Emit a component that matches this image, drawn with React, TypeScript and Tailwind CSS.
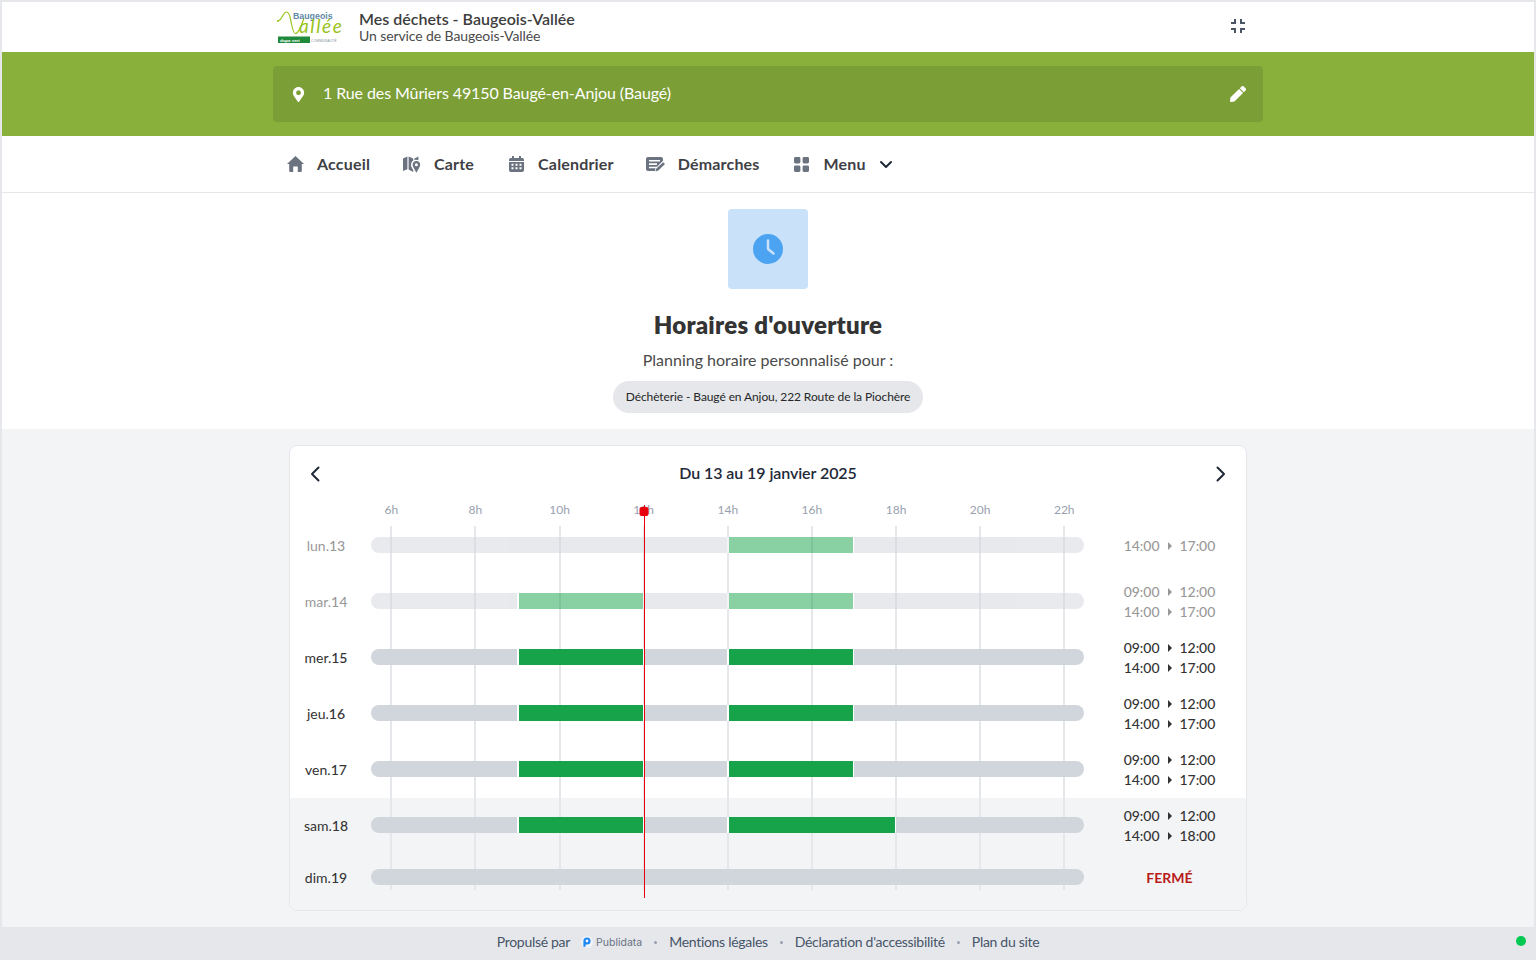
import React from "react";
import { FaMapMarkerAlt, FaPen } from "react-icons/fa";
import { MdFullscreenExit } from "react-icons/md";

type Seg = [number, number];
type Row = { dow: string; num: string; past?: boolean; segs: Seg[]; hours: [string, string][]; h: string };

const AM: Seg = [9, 12];
const PM: Seg = [14, 17];
const both: [string, string][] = [["09:00", "12:00"], ["14:00", "17:00"]];

const rows: Row[] = [
  { dow: "lun.", num: "13", past: true, segs: [PM], hours: [["14:00", "17:00"]], h: "h-14" },
  { dow: "mar.", num: "14", past: true, segs: [AM, PM], hours: both, h: "h-14" },
  { dow: "mer.", num: "15", segs: [AM, PM], hours: both, h: "h-14" },
  { dow: "jeu.", num: "16", segs: [AM, PM], hours: both, h: "h-14" },
  { dow: "ven.", num: "17", segs: [AM, PM], hours: both, h: "h-14" },
  { dow: "sam.", num: "18", segs: [AM, [14, 18]], hours: [["09:00", "12:00"], ["14:00", "18:00"]], h: "h-14" },
  { dow: "dim.", num: "19", segs: [], hours: [], h: "h-12" },
];

const ticks = [6, 8, 10, 12, 14, 16, 18, 20, 22];
const HOUR = 42.06;
const pos = (h: number) => 20.3 + (h - 6) * HOUR;

function Logo() {
  return (
    <svg width="67" height="36" viewBox="0 0 67 36" className="shrink-0">
      <path d="M0 12 L2 11.500 C5 10 6.500 3 9.500 3 C13 3 13.500 10 14.500 15 C15.500 20 16.500 24.500 18.500 24.500 C22 24.500 25 15 27 9" fill="none" stroke="#9ac31c" strokeWidth="1.2" />
      <circle cx="1" cy="12" r="0.9" fill="#9ac31c" />
      <text x="16" y="10" fontFamily="Liberation Sans, sans-serif" fontSize="8.800" fontWeight="700" fill="#5f89a8">Baugeois</text>
      <text x="22" y="23.500" fontFamily="Lato, sans-serif" fontStyle="italic" fontSize="19" letterSpacing="1.600" fill="#9ac31c">allée</text>
      <rect x="1" y="27.500" width="32" height="6.500" fill="#1f8a3b" />
      <text x="3" y="32.500" fontFamily="Liberation Sans, sans-serif" fontSize="4.400" fontWeight="700" fill="#ffffff">dupa vert</text>
      <text x="34" y="32.500" fontFamily="Liberation Sans, sans-serif" fontSize="3.500" fill="#8a98a6">COMMUNAUTÉ</text>
    </svg>
  );
}

function HomeIcon() {
  return (
    <svg width="17" height="16" viewBox="0 0 17 16" fill="#6b7280" className="shrink-0">
      <path d="M8.500 0 17 8h-2.200v6.800a1.200 1.200 0 0 1-1.200 1.200h-2.800v-5.400H6.200V16H3.400a1.200 1.200 0 0 1-1.200-1.200V8H0z" />
    </svg>
  );
}

function MapIcon() {
  return (
    <svg width="18" height="17" viewBox="0 0 18 17" fill="#6b7280" className="shrink-0">
      <path d="M0 2.400 4.400 .6v12.600L0 15zM5.600 .6l4.600 2v2a5 5 0 0 0-2.200 4.200c0 1.800 1.200 3.800 2.200 5.200v2l-4.600-2.400zM11.400 2.600 15.400 .6v3.600a5 5 0 0 0-4-.2z" />
      <path fillRule="evenodd" d="M13.400 5c2.200 0 3.800 1.600 3.800 3.700 0 2.200-2.500 5.400-3.800 8-1.300-2.600-3.800-5.800-3.800-8C9.600 6.600 11.200 5 13.400 5zm0 2.200a1.500 1.500 0 1 0 0 3 1.500 1.500 0 0 0 0-3z" />
    </svg>
  );
}

function CalendarIcon() {
  return (
    <svg width="15" height="16" viewBox="0 0 15 16" fill="#6b7280" className="shrink-0">
      <path fillRule="evenodd" d="M3 0h2v2h5V0h2v2h1.200A1.800 1.800 0 0 1 15 3.800V5H0V3.800A1.800 1.800 0 0 1 1.800 2H3zM0 6h15v8.200a1.800 1.800 0 0 1-1.800 1.800H1.800A1.800 1.800 0 0 1 0 14.200zM2.500 7.800v2h2v-2zm4 0v2h2v-2zm4 0v2h2v-2zm-8 3.400v2h2v-2zm4 0v2h2v-2zm4 0v2h2v-2z" />
    </svg>
  );
}

function FormIcon() {
  return (
    <svg width="19" height="16" viewBox="0 0 19 16" fill="#6b7280" className="shrink-0">
      <path fillRule="evenodd" d="M2 1h13a2 2 0 0 1 2 2v1.800l-6 6H3v1.500h6.500L9 15H2a2 2 0 0 1-2-2V3a2 2 0 0 1 2-2zm1 3v1.600h11V4zm0 3.300v1.600h8V7.300z" />
      <path d="M17.200 6.200 19 8l-6.600 6.600-2.900.9.900-2.900z" />
    </svg>
  );
}

function GridIcon() {
  return (
    <svg width="15" height="15" viewBox="0 0 15 15" fill="#6b7280" className="shrink-0">
      <rect x="0" y="0" width="6.400" height="6.400" rx="1.400" />
      <rect x="8.600" y="0" width="6.400" height="6.400" rx="1.400" />
      <rect x="0" y="8.600" width="6.400" height="6.400" rx="1.400" />
      <rect x="8.600" y="8.600" width="6.400" height="6.400" rx="1.400" />
    </svg>
  );
}

function ClockIcon() {
  return (
    <svg width="30" height="30" viewBox="0 0 30 30">
      <circle cx="15" cy="15" r="15" fill="#4ba3f1" />
      <path d="M15 6.500V15l5.500 4.500" fill="none" stroke="#c9e1f9" strokeWidth="2.500" strokeLinecap="round" strokeLinejoin="round" />
    </svg>
  );
}

function ChevronLeftIcon() {
  return (
    <svg width="10" height="16" viewBox="0 0 10 16" fill="none" stroke="#1f2937" strokeWidth="2" strokeLinecap="round" strokeLinejoin="round">
      <path d="M8.500 1.500 2 8l6.500 6.500" />
    </svg>
  );
}

function ChevronRightIcon() {
  return (
    <svg width="10" height="16" viewBox="0 0 10 16" fill="none" stroke="#1f2937" strokeWidth="2" strokeLinecap="round" strokeLinejoin="round">
      <path d="M1.500 1.500 8 8l-6.500 6.500" />
    </svg>
  );
}

function ChevronDownIcon() {
  return (
    <svg width="14" height="9" viewBox="0 0 14 9" fill="none" stroke="#1f2937" strokeWidth="2" strokeLinecap="round" strokeLinejoin="round" className="ml-[13px]">
      <path d="M2 2l5 5 5-5" />
    </svg>
  );
}

function PublidataMark() {
  return (
    <svg width="12" height="12" viewBox="0 0 12 12">
      <circle cx="6" cy="6" r="6" fill="#f0f4fb" />
      <path fillRule="evenodd" d="M2.400 5a3.600 3.600 0 1 1 3.600 3.600H4.600v2.200H2.400zM6 3.600a1.400 1.400 0 1 0 0 2.800 1.400 1.400 0 0 0 0-2.800z" fill="#1d87f0" />
    </svg>
  );
}

function NavItem({ icon, label, chevron }: { icon: React.ReactNode; label: string; chevron?: boolean }) {
  return (
    <div className="flex items-center px-[14px]">
      <span className="flex w-4 justify-center">{icon}</span>
      <span className="ml-[14px] text-base font-bold tracking-[0.18px] text-[#3f3f46]">{label}</span>
      {chevron && <ChevronDownIcon />}
    </div>
  );
}

function HourRange({ from, to }: { from: string; to: string }) {
  return (
    <div className="flex h-5 items-center justify-center tracking-[-0.05px]">
      <span className="w-9 text-right">{from}</span>
      <span className="mx-2 h-0 w-0 border-y-[4px] border-l-[4px] border-y-transparent border-l-current" />
      <span className="w-9 text-left">{to}</span>
    </div>
  );
}

function Dot() {
  return <span className="mx-[12px] h-[3px] w-[3px] rounded-full bg-gray-400" />;
}

export default function App() {
  return (
    <div className="flex h-screen flex-col overflow-hidden border-x-2 border-t-2 border-gray-200 bg-gray-100 font-['Lato',sans-serif] text-[#404040]">
      <header className="h-[50px] shrink-0 bg-white">
        <div className="mx-auto flex h-full w-[990px] items-center pl-1">
          <Logo />
          <div className="ml-[15px] flex-1 pb-[2px] leading-none">
            <div className="text-base leading-[18px] font-semibold text-[#3d3d3d]">Mes déchets - Baugeois-Vallée</div>
            <div className="text-sm leading-[15px] tracking-[-0.1px] text-[#4a4a4a]">Un service de Baugeois-Vallée</div>
          </div>
          <MdFullscreenExit className="mr-[13px] mb-[2px] text-[24px] text-gray-600" />
        </div>
      </header>

      <div className="h-[84px] shrink-0 bg-[#8ab03c] py-[14px]">
        <div className="mx-auto flex h-14 w-[990px] items-center rounded bg-[#7c9e36] px-4 text-white">
          <FaMapMarkerAlt className="ml-[2px] text-[15px]" />
          <span className="ml-[17px] flex-1 pb-[2px] text-base tracking-[-0.1px]">1 Rue des Mûriers 49150 Baugé-en-Anjou (Baugé)</span>
          <FaPen className="mr-[1px] text-[16px]" />
        </div>
      </div>

      <nav className="h-[57px] shrink-0 border-b border-gray-200 bg-white shadow-[0_1px_1px_rgba(0,0,0,0.03)]">
        <div className="mx-auto flex h-full w-[990px] items-center gap-[6px]">
          <NavItem icon={<HomeIcon />} label="Accueil" />
          <NavItem icon={<MapIcon />} label="Carte" />
          <NavItem icon={<CalendarIcon />} label="Calendrier" />
          <NavItem icon={<FormIcon />} label="Démarches" />
          <NavItem icon={<GridIcon />} label="Menu" chevron />
        </div>
      </nav>

      <section className="flex h-[236px] shrink-0 flex-col items-center bg-white pt-4">
        <div className="flex h-20 w-20 items-center justify-center rounded-sm bg-[#c9e1f9]">
          <ClockIcon />
        </div>
        <h1 className="mt-[20px] text-2xl leading-8 font-extrabold tracking-[0.25px] text-[#333333]">Horaires d'ouverture</h1>
        <p className="mt-[7px] text-base leading-6 text-[#4a4a4a]">Planning horaire personnalisé pour :</p>
        <div className="mt-[9px] flex h-8 items-center rounded-full bg-gray-200 px-[13px] text-xs tracking-[-0.1px] text-[#262626]">
          Déchèterie - Baugé en Anjou, 222 Route de la Piochère
        </div>
      </section>

      <main className="min-h-0 flex-1 pt-4">
        <div className="mx-auto h-[466px] w-[958px] overflow-hidden rounded-lg border border-gray-200 bg-white">
          <div className="flex h-[56px] items-center justify-between pr-[20px] pl-[20px]">
            <ChevronLeftIcon />
            <span className="pb-[2px] text-base font-semibold tracking-[-0.08px] text-gray-800">Du 13 au 19 janvier 2025</span>
            <ChevronRightIcon />
          </div>

          <div className="relative">
            <div className="absolute inset-x-0 top-[296px] h-[120px] bg-gray-100" />

            <div className="relative flex h-4">
              <div className="w-[81px] shrink-0" />
              <div className="relative w-[713px]">
                {ticks.map((t) => (
                  <span key={t} className="absolute top-0 -translate-x-1/2 text-xs leading-4 text-gray-400" style={{ left: pos(t) }}>
                    {t}h
                  </span>
                ))}
              </div>
            </div>

            <div className="relative">
              <div className="pointer-events-none absolute top-0 bottom-0 left-[81px] w-[713px]">
                {ticks.map((t) => (
                  <div key={t} className="absolute top-[8px] bottom-[12px] w-[2px] -translate-x-1/2 bg-gray-200" style={{ left: pos(t) }} />
                ))}
              </div>

              {rows.map((r) => (
                <div key={r.num} className={`relative flex items-center ${r.h}`}>
                  <div className={`w-[72px] shrink-0 text-center text-sm text-[#333333] ${r.past ? "opacity-50" : ""}`}>
                    {r.dow}
                    <span className="font-medium">{r.num}</span>
                  </div>
                  <div className={`relative ml-[9px] h-4 w-[713px] shrink-0 -translate-y-px overflow-hidden rounded-full bg-gray-300 ${r.past ? "opacity-50" : ""}`}>
                    {r.segs.map(([a, b]) => (
                      <div
                        key={a}
                        className="absolute inset-y-0 border-r border-l-2 border-x-white bg-[#16a34a]"
                        style={{ left: pos(a) - 0.5, width: (b - a) * HOUR + 0.5 }}
                      />
                    ))}
                  </div>
                  {r.hours.length ? (
                    <div className={`flex-1 pl-[9px] text-sm font-medium text-[#333333] ${r.past ? "opacity-50" : ""}`}>
                      {r.hours.map(([f, t]) => (
                        <HourRange key={f} from={f} to={t} />
                      ))}
                    </div>
                  ) : (
                    <div className="flex-1 pl-[9px] text-center text-sm font-bold text-[#b91c1c]">FERMÉ</div>
                  )}
                </div>
              ))}
            </div>

            <div className="pointer-events-none absolute top-[3px] left-[353.5px] h-[393px] w-px bg-red-600">
              <div className="absolute top-[2px] left-1/2 h-[9px] w-[9px] -translate-x-1/2 rounded-[2px] bg-red-600" />
            </div>
          </div>
        </div>
      </main>

      <footer className="relative flex h-[33px] shrink-0 items-center justify-center bg-gray-200 pb-[3px] text-sm tracking-[-0.3px] text-[#475569]">
        <span>Propulsé par</span>
        <span className="ml-[11px] flex items-center">
          <PublidataMark />
          <span className="ml-[3px] font-['Inter',sans-serif] text-[10.5px] tracking-normal text-gray-500">Publidata</span>
        </span>
        <Dot />
        <span>Mentions légales</span>
        <Dot />
        <span>Déclaration d'accessibilité</span>
        <Dot />
        <span>Plan du site</span>
        <span className="absolute top-[9px] right-[8px] h-[10px] w-[10px] rounded-full bg-green-500" />
      </footer>
    </div>
  );
}
